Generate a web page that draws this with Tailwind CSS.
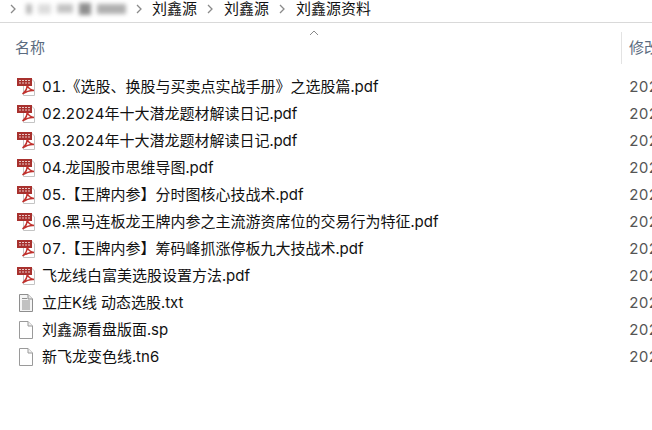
<!DOCTYPE html>
<html lang="en">
<head>
  <meta charset="UTF-8">
  <title>刘鑫源资料</title>
  <script src="https://cdn.jsdelivr.net/npm/@tailwindcss/browser@4"></script>
</head>
<body class="bg-white overflow-hidden font-['Inter','Noto_Sans_CJK_SC',sans-serif] text-[#111]">
  <svg width="0" height="0" class="absolute">
    <defs>
      <symbol id="pdf" viewBox="0 0 20 20">
        <path d="M7.500 1.500H15L18.500 5V18.500H7.500Z" fill="#fff" stroke="#c4c4c4"/>
        <rect x="1" y="1" width="15" height="8" fill="#a8312e"/>
        <path d="M3 3.500H14M3 6H14" stroke="#e9c7c6" stroke-width="1.200" stroke-dasharray="2 1"/>
        <path d="M11 8C11.500 11 9.500 14.500 6.500 17C9.500 15 13.500 13 18 13.500C15 13 12.500 11.500 11 8Z" fill="none" stroke="#c0302c" stroke-width="1.500"/>
      </symbol>
      <symbol id="blank" viewBox="0 0 20 20">
        <path d="M3.500 1.500H12L16.500 6V18.500H3.500Z" fill="#fff" stroke="#9a9a9a"/>
        <path d="M12 1.500V6H16.500" fill="#f0f0f0" stroke="#9a9a9a"/>
      </symbol>
      <symbol id="txt" viewBox="0 0 20 20">
        <path d="M3.500 1.500H12L16.500 6V18.500H3.500Z" fill="#f4f4f4" stroke="#8e8e8e"/>
        <path d="M12 1.500V6H16.500" fill="#e6e6e6" stroke="#8e8e8e"/>
        <path d="M6 5.500H11M6 8H14M6 10H14M6 12H14M6 14H14M6 16H14" stroke="#8e8e8e"/>
      </symbol>
    </defs>
  </svg>

  <!-- Breadcrumb -->
  <div class="h-[23px] border-b border-[#d9d9d9] flex items-start text-[15px] leading-[17px]">
    <svg class="ml-[9px] mt-[4px] w-[8px] h-[10px] shrink-0" viewBox="0 0 8 10" fill="none" stroke="#8a8a8a" stroke-width="1.300"><path d="M2 1L6 5L2 9"/></svg>
    <div class="ml-[9px] mt-[2px] w-[100px] h-[13px] shrink-0 flex items-center gap-[6px] blur-[2px]">
      <div class="w-[6px] h-[10px] bg-[#bbb]"></div>
      <div class="w-[14px] h-[10px] bg-[#ddd]"></div>
      <div class="w-[16px] h-[9px] bg-[#c4c4c4]"></div>
      <div class="w-[12px] h-[12px] bg-[#8f8f8f]"></div>
      <div class="w-[30px] h-[10px] bg-[#b0b0b0]"></div>
    </div>
    <svg class="ml-[9px] mt-[4px] w-[8px] h-[10px] shrink-0" viewBox="0 0 8 10" fill="none" stroke="#8a8a8a" stroke-width="1.300"><path d="M2 1L6 5L2 9"/></svg>
    <span class="ml-[9px] shrink-0">刘鑫源</span>
    <svg class="ml-[9px] mt-[4px] w-[8px] h-[10px] shrink-0" viewBox="0 0 8 10" fill="none" stroke="#8a8a8a" stroke-width="1.300"><path d="M2 1L6 5L2 9"/></svg>
    <span class="ml-[10px] shrink-0">刘鑫源</span>
    <svg class="ml-[9px] mt-[4px] w-[8px] h-[10px] shrink-0" viewBox="0 0 8 10" fill="none" stroke="#8a8a8a" stroke-width="1.300"><path d="M2 1L6 5L2 9"/></svg>
    <span class="ml-[10px] shrink-0">刘鑫源资料</span>
  </div>

  <!-- Column header -->
  <div class="relative h-[50px] flex items-center text-[15px] text-[#5b6b80] overflow-hidden">
    <svg class="absolute left-[309px] top-[7px] w-[10px] h-[6px]" viewBox="0 0 10 6" fill="none" stroke="#8a8a8a"><path d="M1 5L5 1L9 5"/></svg>
    <span class="ml-[15px] w-[606px] shrink-0">名称</span>
    <div class="w-px h-[32px] bg-[#e3e3e3] mr-[7px] shrink-0"></div>
    <span class="whitespace-nowrap shrink-0">修改日期</span>
  </div>

  <!-- File list -->
  <ul class="text-[15px] leading-[27px] overflow-hidden tabular-nums">
    <li class="h-[27px] flex items-center"><svg class="ml-[16px] w-[20px] h-[20px] shrink-0"><use href="#pdf"/></svg><span class="ml-[6px] w-[587px] shrink-0 truncate">01.《选股、换股与买卖点实战手册》之选股篇.pdf</span><span class="text-[#555] whitespace-nowrap shrink-0">2024</span></li>
    <li class="h-[27px] flex items-center"><svg class="ml-[16px] w-[20px] h-[20px] shrink-0"><use href="#pdf"/></svg><span class="ml-[6px] w-[587px] shrink-0 truncate">02.2024年十大潜龙题材解读日记.pdf</span><span class="text-[#555] whitespace-nowrap shrink-0">2024</span></li>
    <li class="h-[27px] flex items-center"><svg class="ml-[16px] w-[20px] h-[20px] shrink-0"><use href="#pdf"/></svg><span class="ml-[6px] w-[587px] shrink-0 truncate">03.2024年十大潜龙题材解读日记.pdf</span><span class="text-[#555] whitespace-nowrap shrink-0">2024</span></li>
    <li class="h-[27px] flex items-center"><svg class="ml-[16px] w-[20px] h-[20px] shrink-0"><use href="#pdf"/></svg><span class="ml-[6px] w-[587px] shrink-0 truncate">04.龙国股市思维导图.pdf</span><span class="text-[#555] whitespace-nowrap shrink-0">2024</span></li>
    <li class="h-[27px] flex items-center"><svg class="ml-[16px] w-[20px] h-[20px] shrink-0"><use href="#pdf"/></svg><span class="ml-[6px] w-[587px] shrink-0 truncate">05.【王牌内参】分时图核心技战术.pdf</span><span class="text-[#555] whitespace-nowrap shrink-0">2024</span></li>
    <li class="h-[27px] flex items-center"><svg class="ml-[16px] w-[20px] h-[20px] shrink-0"><use href="#pdf"/></svg><span class="ml-[6px] w-[587px] shrink-0 truncate">06.黑马连板龙王牌内参之主流游资席位的交易行为特征.pdf</span><span class="text-[#555] whitespace-nowrap shrink-0">2024</span></li>
    <li class="h-[27px] flex items-center"><svg class="ml-[16px] w-[20px] h-[20px] shrink-0"><use href="#pdf"/></svg><span class="ml-[6px] w-[587px] shrink-0 truncate">07.【王牌内参】筹码峰抓涨停板九大技战术.pdf</span><span class="text-[#555] whitespace-nowrap shrink-0">2024</span></li>
    <li class="h-[27px] flex items-center"><svg class="ml-[16px] w-[20px] h-[20px] shrink-0"><use href="#pdf"/></svg><span class="ml-[6px] w-[587px] shrink-0 truncate">飞龙线白富美选股设置方法.pdf</span><span class="text-[#555] whitespace-nowrap shrink-0">2024</span></li>
    <li class="h-[27px] flex items-center"><svg class="ml-[16px] w-[20px] h-[20px] shrink-0"><use href="#txt"/></svg><span class="ml-[6px] w-[587px] shrink-0 truncate">立庄K线 动态选股.txt</span><span class="text-[#555] whitespace-nowrap shrink-0">2024</span></li>
    <li class="h-[27px] flex items-center"><svg class="ml-[16px] w-[20px] h-[20px] shrink-0"><use href="#blank"/></svg><span class="ml-[6px] w-[587px] shrink-0 truncate">刘鑫源看盘版面.sp</span><span class="text-[#555] whitespace-nowrap shrink-0">2024</span></li>
    <li class="h-[27px] flex items-center"><svg class="ml-[16px] w-[20px] h-[20px] shrink-0"><use href="#blank"/></svg><span class="ml-[6px] w-[587px] shrink-0 truncate">新飞龙变色线.tn6</span><span class="text-[#555] whitespace-nowrap shrink-0">2024</span></li>
  </ul>
</body>
</html>
